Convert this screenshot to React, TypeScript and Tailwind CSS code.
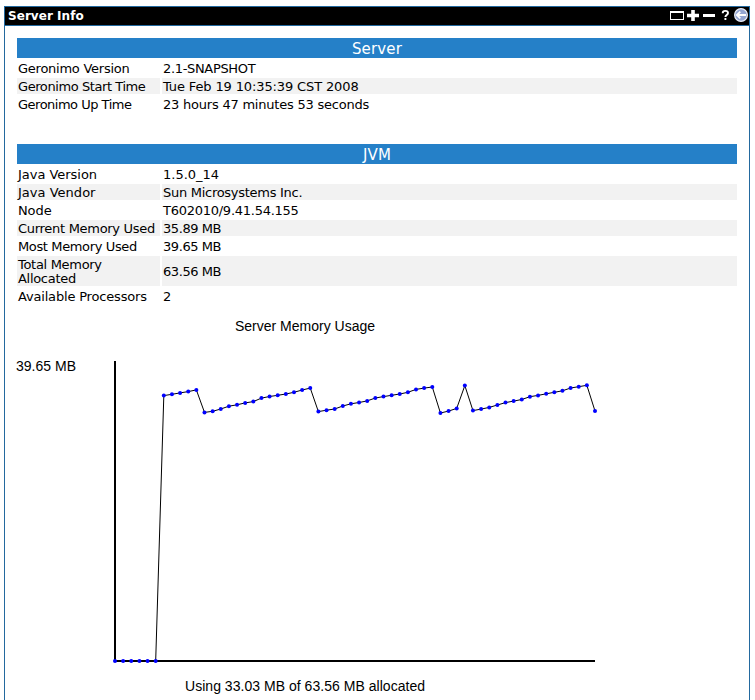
import React from "react";

type Row = { label: React.ReactNode; value: string; tall?: boolean; labelClass: string; valueClass: string };

const serverRows: Row[] = [
  { label: "Geronimo Version", value: "2.1-SNAPSHOT", labelClass: "tracking-[-0.25px]", valueClass: "tracking-[-0.33px]" },
  { label: "Geronimo Start Time", value: "Tue Feb 19 10:35:39 CST 2008", labelClass: "tracking-[-0.42px]", valueClass: "tracking-[-0.13px]" },
  { label: "Geronimo Up Time", value: "23 hours 47 minutes 53 seconds", labelClass: "tracking-[-0.5px]", valueClass: "tracking-[-0.22px]" },
];

const jvmRows: Row[] = [
  { label: "Java Version", value: "1.5.0_14", labelClass: "tracking-[-0.03px]", valueClass: "" },
  { label: "Java Vendor", value: "Sun Microsystems Inc.", labelClass: "tracking-[0.02px]", valueClass: "tracking-[-0.28px]" },
  { label: "Node", value: "T602010/9.41.54.155", labelClass: "tracking-[-0.1px]", valueClass: "tracking-[-0.26px]" },
  { label: "Current Memory Used", value: "35.89 MB", labelClass: "tracking-[-0.29px]", valueClass: "tracking-[-0.42px]" },
  { label: "Most Memory Used", value: "39.65 MB", labelClass: "tracking-[-0.37px]", valueClass: "tracking-[-0.42px]" },
  { label: <>Total Memory<br />Allocated</>, value: "63.56 MB", tall: true, labelClass: "tracking-[-0.3px]", valueClass: "tracking-[-0.42px]" },
  { label: "Available Processors", value: "2", labelClass: "tracking-[-0.18px]", valueClass: "" },
];

// Vertical position of each memory sample within the chart.
const samples = [
  661, 661, 661, 661, 661, 661, 395.6, 394.3, 392.9, 391.6, 389.9, 412.4, 411.3, 409, 406.2, 404.8,
  402.9, 401.6, 398.1, 396.5, 395.3, 394, 392.3, 390, 388.1, 411.6, 410.2, 409, 406, 403.8, 402.5,
  400.9, 398, 396.6, 395.3, 394, 392.3, 389.4, 388.1, 387, 413, 411.1, 408.4, 385.6, 410.6, 409.1,
  407.4, 405, 402.6, 401.1, 399.5, 396.7, 395.4, 393.8, 392.3, 390.8, 388, 386.7, 385.3, 411,
];
const points = samples.map((y, i) => ({ x: 115 + (i * 480) / 59, y }));

function InfoTable({ title, rows }: { title: string; rows: Row[] }) {
  return (
    <section className="flex flex-col gap-[2px]">
      <h2 className="flex h-5 items-center justify-center bg-[#2580c8] pt-0.5 text-[15px] leading-5 tracking-[0.15px] text-white">
        {title}
      </h2>
      {rows.map((row, i) => (
        <div
          key={row.value}
          className={`grid grid-cols-[143px_1fr] gap-[2px] leading-[14px] ${row.tall ? "h-[30px]" : "h-4"}`}
        >
          <div className={`flex items-center whitespace-nowrap pl-px pt-0.5 ${row.labelClass} ${i % 2 ? "bg-[#f2f2f2]" : ""}`}>
            <span>{row.label}</span>
          </div>
          <div className={`flex items-center whitespace-nowrap pl-px pt-0.5 ${row.valueClass} ${i % 2 ? "bg-[#f2f2f2]" : ""}`}>
            {row.value}
          </div>
        </div>
      ))}
    </section>
  );
}

function WindowControls() {
  return (
    <svg width="80" height="18" viewBox="669 7 80 18" className="block">
      <path d="M670 11h14v9h-14zM671 13v6h12v-6z" fill="#fff" fillRule="evenodd" />
      <path d="M687 15.5h12M693 10v11" stroke="#fff" strokeWidth="3.6" />
      <path d="M703 15.5h12" stroke="#fff" strokeWidth="3" />
      <path d="M722.7 13.2c0-1.5 1-2.3 2.6-2.3s2.7.8 2.7 2.2c0 2-2.6 2-2.6 4M725.4 18v2" fill="none" stroke="#fff" strokeWidth="1.9" />
      <circle cx="741" cy="15" r="6.4" fill="#93a5d2" stroke="#e8ecf5" strokeWidth="1.2" />
      <path d="M746 15h-8.5M740.3 11.6L736.8 15l3.5 3.4" fill="none" stroke="#fff" strokeWidth="1.8" />
    </svg>
  );
}

function MemoryChart() {
  return (
    <svg
      width="744"
      height="394"
      viewBox="5 306 744 394"
      className="block font-['Liberation_Sans',Arial,sans-serif] text-[14px]"
    >
      <text x="235" y="331" textLength="140">Server Memory Usage</text>
      <text x="16" y="371" textLength="60">39.65 MB</text>
      <text x="185" y="691" textLength="240">Using 33.03 MB of 63.56 MB allocated</text>
      <path d="M115 361V661H595" fill="none" stroke="#000" strokeWidth="2" />
      <polyline points={points.map((p) => `${p.x},${p.y}`).join(" ")} fill="none" stroke="#000" strokeWidth="1" />
      {points.map((p) => (
        <circle key={p.x} cx={p.x} cy={p.y} r="2" fill="#00f" />
      ))}
    </svg>
  );
}

export default function App() {
  return (
    <main className="h-[700px] w-[755px] overflow-hidden bg-white pl-1 pt-1.5 font-['DejaVu_Sans',Verdana,sans-serif] text-[13px] text-black">
      <div className="h-[694px] w-[746px] border border-b-0 border-[#23699e]">
        <header className="flex h-[19px] items-start justify-between border-b border-[#23699e] bg-black pl-[3px] text-white">
          <h1 className="text-[12px] font-bold leading-[19px] tracking-[0.05px]">Server Info</h1>
          <WindowControls />
        </header>
        <div className="ml-3 mt-3 flex w-[720px] flex-col gap-8">
          <InfoTable title="Server" rows={serverRows} />
          <InfoTable title="JVM" rows={jvmRows} />
        </div>
        <div className="mt-0.5">
          <MemoryChart />
        </div>
      </div>
    </main>
  );
}
